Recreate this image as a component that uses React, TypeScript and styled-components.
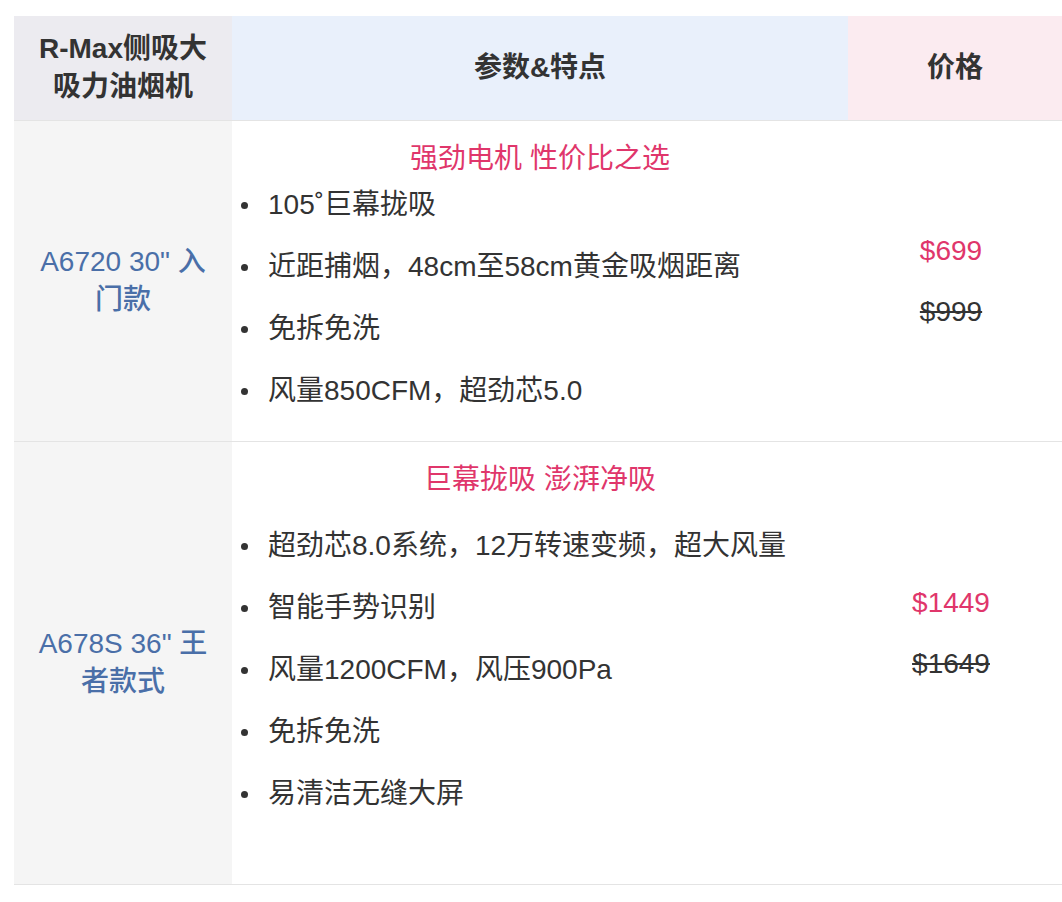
import React from "react";
import styled, { createGlobalStyle } from "styled-components";

const GlobalStyle = createGlobalStyle`
  html, body {
    margin: 0;
    padding: 0;
    background: #fff;
  }
  body {
    font-family: "Liberation Sans", "Noto Sans CJK SC", sans-serif;
    color: #333;
  }
`;

const Page = styled.div`
  padding: 16px 0 0 14px;
`;

const Table = styled.table`
  width: 1048px;
  border-collapse: collapse;
  table-layout: fixed;
  font-size: 28px;
`;

const Head = styled.th<{ $bg: string }>`
  height: 104px;
  padding: 0 16px;
  background: ${(p) => p.$bg};
  font-weight: 700;
  line-height: 38px;
  text-align: center;
  vertical-align: middle;
  color: #333;
  border-bottom: 1px solid #e4e4e4;
`;

const Row = styled.tr`
  border-bottom: 1px solid #e4e4e4;
`;

const ModelCell = styled.td`
  background: #f5f5f5;
  padding: 0 16px;
  text-align: center;
  vertical-align: middle;
  line-height: 38px;
  color: #4a6fa8;
  font-weight: 500;
`;

const FeatureCell = styled.td`
  padding: 18px 0 0;
  vertical-align: top;
`;

const Slogan = styled.div`
  text-align: center;
  line-height: 40px;
  color: #e0366b;
`;

const List = styled.ul<{ $top: number; $bottom: number }>`
  margin: ${(p) => p.$top}px 0 ${(p) => p.$bottom}px;
  padding: 0 0 0 36px;
  list-style: none;

  li {
    position: relative;
    line-height: 40px;
  }
  li::before {
    content: "";
    position: absolute;
    left: -27px;
    top: 17px;
    width: 7px;
    height: 7px;
    border-radius: 50%;
    background: #333;
  }
  li + li {
    margin-top: 22px;
  }
`;

const PriceCell = styled.td<{ $shift: number }>`
  text-align: center;
  vertical-align: middle;
  padding: 0 0 ${(p) => p.$shift}px;
`;

const Price = styled.div<{ $old?: boolean }>`
  line-height: 40px;
  padding-right: 8px;
  color: ${(p) => (p.$old ? "#333" : "#e0366b")};
  text-decoration: ${(p) => (p.$old ? "line-through" : "none")};

  & + & {
    margin-top: 21px;
  }
`;

type Item = {
  name: [string, string];
  slogan: string;
  features: string[];
  price: string;
  old: string;
  top: number;
  bottom: number;
  shift: number;
};

const items: Item[] = [
  {
    name: ["A6720 30\" 入", "门款"],
    slogan: "强劲电机 性价比之选",
    features: [
      "105˚巨幕拢吸",
      "近距捕烟，48cm至58cm黄金吸烟距离",
      "免拆免洗",
      "风量850CFM，超劲芯5.0",
    ],
    price: "$699",
    old: "$999",
    top: 6,
    bottom: 30,
    shift: 0,
  },
  {
    name: ["A678S 36\" 王", "者款式"],
    slogan: "巨幕拢吸 澎湃净吸",
    features: [
      "超劲芯8.0系统，12万转速变频，超大风量",
      "智能手势识别",
      "风量1200CFM，风压900Pa",
      "免拆免洗",
      "易清洁无缝大屏",
    ],
    price: "$1449",
    old: "$1649",
    top: 26,
    bottom: 70,
    shift: 60,
  },
];

export default function App() {
  return (
    <Page>
      <GlobalStyle />
      <Table>
        <colgroup>
          <col style={{ width: 218 }} />
          <col style={{ width: 616 }} />
          <col style={{ width: 214 }} />
        </colgroup>
        <thead>
          <tr>
            <Head $bg="#ecebf0">
              R-Max侧吸大
              <br />
              吸力油烟机
            </Head>
            <Head $bg="#e9f0fb">参数&amp;特点</Head>
            <Head $bg="#fbebf0">价格</Head>
          </tr>
        </thead>
        <tbody>
          {items.map((it) => (
            <Row key={it.price}>
              <ModelCell>
                {it.name[0]}
                <br />
                {it.name[1]}
              </ModelCell>
              <FeatureCell>
                <Slogan>{it.slogan}</Slogan>
                <List $top={it.top} $bottom={it.bottom}>
                  {it.features.map((f) => (
                    <li key={f}>{f}</li>
                  ))}
                </List>
              </FeatureCell>
              <PriceCell $shift={it.shift}>
                <Price>{it.price}</Price>
                <Price $old>{it.old}</Price>
              </PriceCell>
            </Row>
          ))}
        </tbody>
      </Table>
    </Page>
  );
}
